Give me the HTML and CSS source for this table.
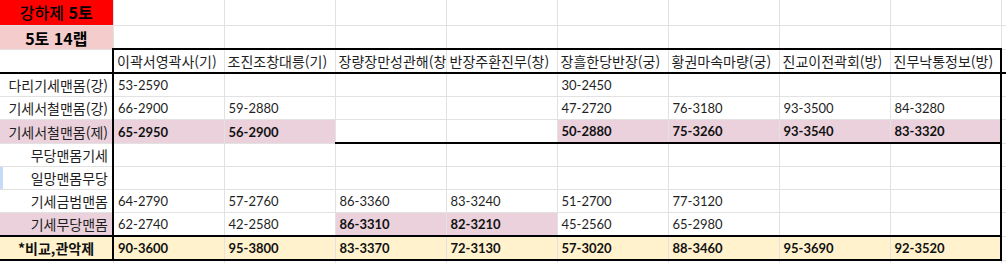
FILE: index.html
```html
<!DOCTYPE html>
<html lang="ko">
<head>
<meta charset="utf-8">
<title>강하제 5토</title>
<link rel="stylesheet" href="styles.css">
</head>
<body>
<table class="sheet">
  <colgroup>
    <col class="c-label">
    <col class="c-data"><col class="c-data"><col class="c-data"><col class="c-data">
    <col class="c-data"><col class="c-data"><col class="c-data"><col class="c-data">
    <col class="c-extra">
  </colgroup>
  <tr class="r-title">
    <td class="title"><span class="reg">강하제</span> 5토</td>
    <td></td><td></td><td></td><td></td><td></td><td></td><td></td><td></td><td></td>
  </tr>
  <tr>
    <td class="sub">5토 14랩</td>
    <td></td><td></td><td></td><td></td><td></td><td></td><td></td><td></td><td></td>
  </tr>
  <tr class="head">
    <td class="lab"></td>
    <td class="h">이곽서영곽사(기)</td>
    <td class="h">조진조창대릉(기)</td>
    <td class="h">장량장만성관해(창</td>
    <td class="h">반장주환진무(창)</td>
    <td class="h">장흘한당반장(궁)</td>
    <td class="h">황권마속마량(궁)</td>
    <td class="h">진교이전곽회(방)</td>
    <td class="h last">진무낙통정보(방)</td>
    <td></td>
  </tr>
  <tr>
    <td class="lab">다리기세맨몸(강)</td>
    <td>53-2590</td><td></td><td></td><td></td><td>30-2450</td><td></td><td></td><td class="last"></td>
    <td></td>
  </tr>
  <tr>
    <td class="lab">기세서철맨몸(강)</td>
    <td>66-2900</td><td>59-2880</td><td></td><td></td><td>47-2720</td><td>76-3180</td><td>93-3500</td><td class="last">84-3280</td>
    <td></td>
  </tr>
  <tr class="pink-row">
    <td class="lab pk">기세서철맨몸(제)</td>
    <td class="pk bd">65-2950</td><td class="pk bd">56-2900</td>
    <td class="cut"></td><td class="cut"></td>
    <td class="pk bd cut">50-2880</td><td class="pk bd cut">75-3260</td><td class="pk bd cut">93-3540</td><td class="pk bd cut last">83-3320</td>
    <td></td>
  </tr>
  <tr>
    <td class="lab">무당맨몸기세</td>
    <td></td><td></td><td></td><td></td><td></td><td></td><td></td><td class="last"></td>
    <td></td>
  </tr>
  <tr>
    <td class="lab sel">일망맨몸무당</td>
    <td></td><td></td><td></td><td></td><td></td><td></td><td></td><td class="last"></td>
    <td></td>
  </tr>
  <tr>
    <td class="lab">기세금범맨몸</td>
    <td>64-2790</td><td>57-2760</td><td>86-3360</td><td>83-3240</td><td>51-2700</td><td>77-3120</td><td></td><td class="last"></td>
    <td></td>
  </tr>
  <tr>
    <td class="lab pk">기세무당맨몸</td>
    <td>62-2740</td><td>42-2580</td><td class="pk bd">86-3310</td><td class="pk bd">82-3210</td><td>45-2560</td><td>65-2980</td><td></td><td class="last"></td>
    <td></td>
  </tr>
  <tr class="total">
    <td class="lab tot">*비교,관악제</td>
    <td>90-3600</td><td>95-3800</td><td>83-3370</td><td>72-3130</td><td>57-3020</td><td>88-3460</td><td>95-3690</td><td class="last">92-3520</td>
    <td class="plain"></td>
  </tr>
  <tr class="r-tail">
    <td></td><td></td><td></td><td></td><td></td><td></td><td></td><td></td><td></td><td></td>
  </tr>
</table>
</body>
</html>
```

FILE: styles.css
```css
html, body {
  margin: 0;
  padding: 0;
  background: #ffffff;
}

.sheet {
  border-collapse: collapse;
  table-layout: fixed;
  width: 1050px;
  font-family: Lato, "Noto Sans CJK KR", sans-serif;
  font-size: 13px;
  color: #1f1f1f;
}

.c-label { width: 113px; }
.c-data { width: 111px; }
.c-extra { width: 50px; }

.sheet td {
  height: 20px;
  padding: 0 4px 2px 4px;
  border: 1px solid #e2e2e2;
  vertical-align: bottom;
  line-height: 17px;
  white-space: nowrap;
  overflow: hidden;
  text-overflow: clip;
}

.sheet tr:first-child td { border-top: 0; }
.sheet td:first-child { border-left: 0; }

.r-title td { height: 23px; }
.r-tail td { height: 4px; }

.title {
  background: #ff0000;
  text-align: center;
  vertical-align: middle !important;
  padding-bottom: 0 !important;
  font-family: "Noto Sans CJK KR", sans-serif;
  font-size: 16px;
  font-weight: 700;
  color: #000;
}
.title .reg { font-weight: 500; }

.sub {
  background: #f4cccc;
  text-align: center;
  font-family: "Noto Sans CJK KR", sans-serif;
  font-size: 16px;
  font-weight: 700;
  color: #000;
}

.head td { border-bottom: 2px solid #000; }
.head .h {
  border-top: 2px solid #000;
  font-family: "Noto Sans CJK KR", sans-serif;
  font-size: 14px;
  padding-left: 3px;
}

.lab {
  text-align: right;
  font-family: "Noto Sans CJK KR", sans-serif;
  font-size: 14px;
  border-right: 2px solid #000 !important;
}

.last { border-right: 2px solid #000 !important; }

.pk { background: #ead1dc; border-color: #dccbd2; }
.bd { font-weight: 700; color: #111; }

.cut { border-bottom: 2px solid #000 !important; }

.sel { box-shadow: inset 3px 0 0 #c6dbf5; }

.total td {
  border-top: 2px solid #000;
  border-bottom: 2px solid #000;
}
.total td:not(.plain) {
  background: #fff2cc;
  font-weight: 700;
  color: #111;
}
.total .plain {
  border-top: 1px solid #e2e2e2;
  border-bottom: 1px solid #e2e2e2;
}
.tot { text-align: center !important; font-weight: 700; }
```
